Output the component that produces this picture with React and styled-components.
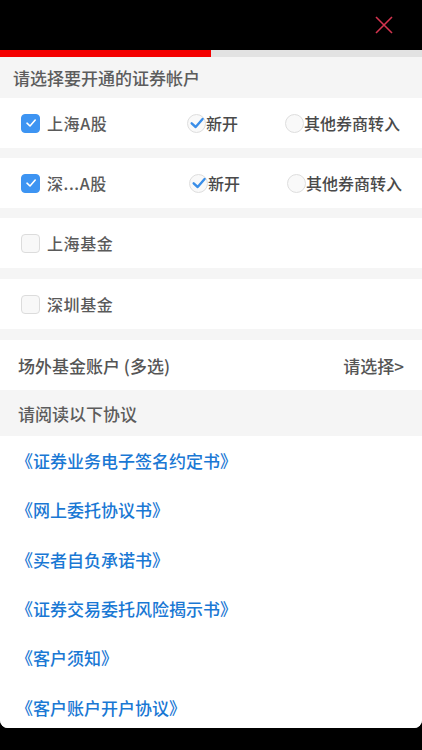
import React from "react"
import styled, { createGlobalStyle } from "styled-components"

const GlobalStyle = createGlobalStyle`
  html, body {
    margin: 0;
    padding: 0;
    background: #000;
  }
  body {
    font-family: "Noto Sans CJK SC", "Noto Sans", sans-serif;
  }
`

const Screen = styled.div`
  width: 422px;
  height: 750px;
  background: #000;
  display: flex;
  flex-direction: column;
  overflow: hidden;
`

const TopBar = styled.div`
  height: 50px;
  display: flex;
  align-items: center;
  justify-content: flex-end;
  padding-right: 28px;
`

const CloseButton = styled.button`
  border: 0;
  background: none;
  padding: 0;
  width: 20px;
  height: 20px;
  display: flex;
  align-items: center;
  justify-content: center;
`

const Progress = styled.div`
  height: 7px;
  background: #e2e2e2;
  display: flex;
`

const ProgressFill = styled.div`
  background: #f40000;
  height: 100%;
`

const Panel = styled.div`
  background: #f5f5f5;
  height: 671px;
  border-radius: 0 0 8px 8px;
  overflow: hidden;
  display: flex;
  flex-direction: column;
`

const SectionTitle = styled.div`
  height: ${p => p.$h}px;
  display: flex;
  align-items: center;
  padding-left: ${p => p.$pl}px;
  font-size: 17px;
  color: #5c5c5c;
  font-weight: 500;
  flex-shrink: 0;
`

const Row = styled.div`
  background: #fff;
  height: 50px;
  margin-bottom: ${p => p.$gap}px;
  display: flex;
  align-items: center;
  padding-left: 21px;
  flex-shrink: 0;
`

const Label = styled.span`
  font-size: 16px;
  color: #5a5a5a;
  font-weight: 500;
  margin-left: 7px;
  letter-spacing: 0.6px;
  line-height: 20px;
`

const LabelCell = styled.div`
  width: ${p => p.$w}px;
  display: flex;
  align-items: center;
`

const Box = styled.span`
  width: 19px;
  height: 19px;
  border-radius: 4px;
  box-sizing: border-box;
  display: inline-flex;
  align-items: center;
  justify-content: center;
  background: ${p => (p.$on ? "#3d94f2" : "#f8f8f8")};
  border: 1px solid ${p => (p.$on ? "#3d94f2" : "#dcdcdc")};
`

const RadioCell = styled.div`
  width: ${p => p.$w}px;
  display: flex;
  align-items: center;
`

const Circle = styled.span`
  width: 19px;
  height: 19px;
  border-radius: 50%;
  box-sizing: border-box;
  border: 1px solid #dedede;
  background: #f9f9f9;
  display: inline-flex;
  align-items: center;
  justify-content: center;
`

const RadioText = styled.span`
  font-size: 16px;
  color: #4a4a4a;
  font-weight: 500;
  line-height: 20px;
`

const SelectRow = styled(Row)`
  justify-content: space-between;
  padding: 0 18px 0 18px;
`

const Picker = styled.span`
  font-size: 17px;
  color: #555;
  font-weight: 500;
`

const LinkList = styled.div`
  background: #fff;
  flex: 1;
  display: flex;
  flex-direction: column;
`

const DocLink = styled.a`
  height: 49.3px;
  display: flex;
  align-items: center;
  padding-left: 16px;
  font-size: 17px;
  font-weight: 500;
  color: #1a78d4;
  text-decoration: none;
  flex-shrink: 0;
`

const Tick = ({ color = "#fff", size = 12, w = 1.6 }) => (
  <svg width={size} height={size} viewBox="0 0 12 12" fill="none">
    <path d="M2 6.2 L5 9 L10.2 3" stroke={color} strokeWidth={w} strokeLinecap="round" strokeLinejoin="round" />
  </svg>
)

const Check = ({ on, label, w }) => (
  <LabelCell $w={w}>
    <Box $on={on}>{on && <Tick />}</Box>
    <Label>{label}</Label>
  </LabelCell>
)

const Radio = ({ on, label, w }) => (
  <RadioCell $w={w}>
    <Circle>{on && <Tick color="#3a8ee8" size={16} w={1.8} />}</Circle>
    <RadioText>{label}</RadioText>
  </RadioCell>
)

const docs = [
  "《证券业务电子签名约定书》",
  "《网上委托协议书》",
  "《买者自负承诺书》",
  "《证券交易委托风险揭示书》",
  "《客户须知》",
  "《客户账户开户协议》",
]

const App = () => {
  return (
    <Screen>
      <GlobalStyle />
      <TopBar>
        <CloseButton>
          <svg width="18" height="18" viewBox="0 0 18 18">
            <path d="M1 1 L17 17 M17 1 L1 17" stroke="#d3344f" strokeWidth="1.6" />
          </svg>
        </CloseButton>
      </TopBar>
      <Progress>
        <ProgressFill style={{ width: "50%" }} />
      </Progress>
      <Panel>
        <SectionTitle $h={41} $pl={13}>请选择要开通的证券帐户</SectionTitle>
        <Row $gap={10}>
          <Check on label="上海A股" w={166} />
          <Radio on label="新开" w={98} />
          <Radio label="其他券商转入" />
        </Row>
        <Row $gap={10}>
          <Check on label="深...A股" w={168} />
          <Radio on label="新开" w={98} />
          <Radio label="其他券商转入" />
        </Row>
        <Row $gap={11}>
          <Check label="上海基金" />
        </Row>
        <Row $gap={11}>
          <Check label="深圳基金" />
        </Row>
        <SelectRow $gap={0}>
          <Picker>场外基金账户 (多选)</Picker>
          <Picker>请选择&gt;</Picker>
        </SelectRow>
        <SectionTitle $h={46} $pl={18}>请阅读以下协议</SectionTitle>
        <LinkList>
          {docs.map(d => (
            <DocLink key={d} href="#">{d}</DocLink>
          ))}
        </LinkList>
      </Panel>
    </Screen>
  )
}

export default App
